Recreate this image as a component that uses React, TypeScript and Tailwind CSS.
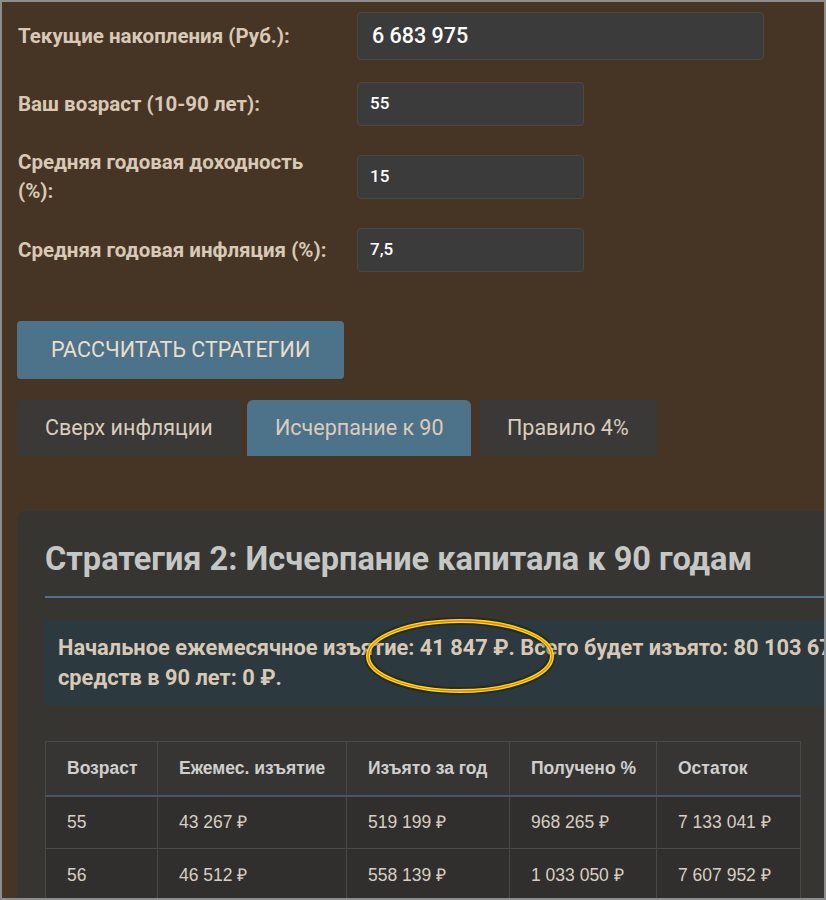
import React from "react";

const rows = [
  ["55", "43 267 ₽", "519 199 ₽", "968 265 ₽", "7 133 041 ₽"],
  ["56", "46 512 ₽", "558 139 ₽", "1 033 050 ₽", "7 607 952 ₽"],
];

function Field({ label, value, wide }: { label: React.ReactNode; value: string; wide?: boolean }) {
  return (
    <div className="flex items-center">
      <div className="w-[340px] shrink-0 pl-px text-[20.5px] font-bold leading-[29px] text-[#d8c9b5]">{label}</div>
      <div
        className={
          (wide ? "w-[407px] h-[48px] pl-[14px] text-[21.5px] " : "w-[227px] h-[44px] pl-[12px] text-[17px] ") +
          "flex items-center rounded-[4px] border border-[#4a4845] bg-[#3b3b3b] font-medium text-white"
        }
      >
        {value}
      </div>
    </div>
  );
}

export default function App() {
  return (
    <div className="relative h-[900px] w-[826px] overflow-hidden border-2 border-[#8d8d8d] bg-[#463525] font-['Roboto',sans-serif]">
      <div className="pl-[15px] pt-[10px]">
        <div className="flex flex-col gap-[22px]">
          <Field label="Текущие накопления (Руб.):" value="6 683 975" wide />
          <Field label="Ваш возраст (10-90 лет):" value="55" />
          <Field label={<>Средняя годовая доходность<br />(%):</>} value="15" />
          <Field label="Средняя годовая инфляция (%):" value="7,5" />
        </div>

        <div className="mt-[49px] flex h-[58px] w-[327px] items-center rounded-[4px] bg-[#4c7389] pl-[34px] text-[21.5px] text-[#e9ddcc]">
          РАССЧИТАТЬ СТРАТЕГИИ
        </div>

        <div className="mt-[21px] flex text-[21.5px] text-[#dacdbb]">
          <div className="flex h-[56px] w-[224px] items-center rounded-t-[3px] bg-[#3a3938] pl-[28px]">Сверх инфляции</div>
          <div className="ml-[6px] flex h-[56px] w-[224px] items-center rounded-t-[6px] bg-[#4c7389] pl-[28px]">Исчерпание к 90</div>
          <div className="ml-[8px] flex h-[56px] w-[178px] items-center rounded-t-[3px] bg-[#3a3938] pl-[28px]">Правило 4%</div>
        </div>

        <div className="mt-[55px] w-[960px] rounded-[8px] bg-[#373532] px-[28px] pt-[22px] pb-[40px]">
          <h2 className="text-[32.5px] font-bold leading-[52px] text-[#c4c7c4]">Стратегия 2: Исчерпание капитала к 90 годам</h2>
          <div className="mt-[11px] h-[2px] bg-[#4c7389]" />
          <div className="mt-[22px] rounded-[4px] bg-[#2c3a40] px-[13px] py-[13px] text-[21.8px] font-bold leading-[30px] text-[#d8c9b5]">
            <div className="whitespace-nowrap">Начальное ежемесячное изъятие: 41 847 ₽. Всего будет изъято: 80 103 675 ₽.</div>
            <div>средств в 90 лет: 0 ₽.</div>
          </div>
          <table className="mt-[35px] border-collapse font-['Liberation_Sans',Arial,sans-serif] text-[17.5px]">
            <thead>
              <tr className="h-[54px] border-b-2 border-[#4a5763] bg-[#363533] text-left text-[17.5px] font-bold text-[#cfcfcf]">
                <th className="w-[112px] border border-[#4a4946] pl-[21px]">Возраст</th>
                <th className="w-[189px] border border-[#4a4946] pl-[21px]">Ежемес. изъятие</th>
                <th className="w-[163px] border border-[#4a4946] pl-[21px]">Изъято за год</th>
                <th className="w-[147px] border border-[#4a4946] pl-[21px]">Получено %</th>
                <th className="w-[144px] border border-[#4a4946] pl-[21px]">Остаток</th>
              </tr>
            </thead>
            <tbody>
              {rows.map((r) => (
                <tr key={r[0]} className="h-[53px] bg-[#302f2d] text-[#d8cec2]">
                  {r.map((c, i) => (
                    <td key={i} className="border border-[#4a4946] pl-[21px]">{c}</td>
                  ))}
                </tr>
              ))}
            </tbody>
          </table>
        </div>
      </div>

      <svg className="pointer-events-none absolute left-[361px] top-[614px]" width="196" height="80" viewBox="0 0 196 80">
        <ellipse cx="97" cy="40" rx="92" ry="35" fill="none" stroke="rgba(0,0,0,0.25)" strokeWidth="8" />
        <ellipse cx="97" cy="40" rx="92" ry="35" fill="none" stroke="#ffe000" strokeWidth="4" />
        <ellipse cx="97" cy="40" rx="92" ry="35" fill="none" stroke="#e87a28" strokeWidth="1.3" />
      </svg>
    </div>
  );
}
